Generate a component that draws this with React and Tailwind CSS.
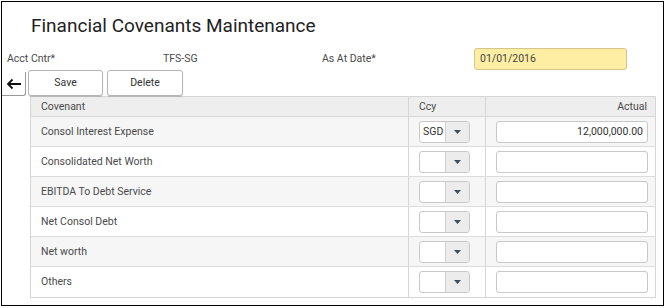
const rows = [
  { name: 'Consol Interest Expense', ccy: 'SGD', actual: '12,000,000.00' },
  { name: 'Consolidated Net Worth', ccy: '', actual: '' },
  { name: 'EBITDA To Debt Service', ccy: '', actual: '' },
  { name: 'Net Consol Debt', ccy: '', actual: '' },
  { name: 'Net worth', ccy: '', actual: '' },
  { name: 'Others', ccy: '', actual: '' },
]

function CcySelect({ value }) {
  return (
    <div className="flex w-[51px] h-[22px] border border-[#c8c8c8] rounded-[3px] overflow-hidden bg-white">
      <div className="flex-1 flex items-center pl-[3px] text-[10.5px] text-[#333]">{value}</div>
      <div className="w-[24px] bg-[#ececec] border-l border-[#d0d0d0] flex items-center justify-center">
        <svg width="7" height="4" viewBox="0 0 7 4"><path d="M0 0h7L3.5 4z" fill="#3d4f5c" /></svg>
      </div>
    </div>
  )
}

export default function App() {
  return (
    <div className="w-[668px] h-[308px] bg-white" style={{ fontFamily: 'Roboto, "Liberation Sans", sans-serif' }}>
      <div className="ml-px mt-px w-[663px] h-[305px] border border-black">
        <h1 className="pl-[29px] pt-[12px] h-[45px] text-[19px] leading-[24px] text-[#222]">
          Financial Covenants Maintenance
        </h1>

        <div className="flex items-center h-[23px] text-[10.5px] text-[#4a4a4a]">
          <span className="pl-[5px] w-[161px]">Acct Cntr*</span>
          <span className="w-[159px]">TFS-SG</span>
          <span className="w-[152px]">As At Date*</span>
          <div className="w-[153px] h-[22px] rounded-[3px] border border-[#d6c58a] bg-[#fdeea4] flex items-center pl-[5px] text-[10.5px] text-[#444]">
            01/01/2016
          </div>
        </div>

        <div className="flex items-end h-[26px]">
          <div className="w-[24px] h-[24px] border-r border-b border-[#999] rounded-br-[3px] flex items-center justify-center">
            <svg width="16" height="12" viewBox="0 0 16 12" fill="none" stroke="#111" strokeWidth="1.8">
              <path d="M15 6H2M6.5 1.5 2 6l4.5 4.5" />
            </svg>
          </div>
          <div className="flex gap-[4px] ml-[2px] self-stretch">
            <button className="w-[75px] h-[26px] border border-[#b5b5b5] rounded-[3px] bg-white text-[10.5px] text-[#333] shadow-[0_1px_1px_rgba(0,0,0,0.15)]">Save</button>
            <button className="w-[76px] h-[26px] border border-[#b5b5b5] rounded-[3px] bg-white text-[10.5px] text-[#333] shadow-[0_1px_1px_rgba(0,0,0,0.15)]">Delete</button>
          </div>
        </div>

        <div className="ml-[28px] w-[626px] border border-[#d6d6d6] text-[10.5px] text-[#4a4a4a]">
          <div className="flex h-[20px] bg-[#eeeeee] border-b border-[#d6d6d6]">
            <div className="w-[377px] pl-[10px] flex items-center">Covenant</div>
            <div className="w-[77px] pl-[10px] flex items-center border-l border-[#d6d6d6]">Ccy</div>
            <div className="flex-1 pr-[8px] flex items-center justify-end border-l border-[#d6d6d6]">Actual</div>
          </div>
          {rows.map((r, i) => (
            <div key={r.name} className={`flex h-[30px] ${i < rows.length - 1 ? 'border-b border-[#dcdcdc]' : ''} ${i % 2 === 0 ? 'bg-[#f6f6f6]' : 'bg-white'}`}>
              <div className="w-[377px] pl-[10px] flex items-center">{r.name}</div>
              <div className="w-[77px] pl-[10px] flex items-center border-l border-[#d6d6d6]">
                <CcySelect value={r.ccy} />
              </div>
              <div className="flex-1 pl-[10px] pr-[7px] flex items-center border-l border-[#d6d6d6]">
                <div className="w-full h-[22px] border border-[#c8c8c8] rounded-[3px] bg-white flex items-center justify-end pr-[4px] text-[10.5px] text-[#333]">
                  {r.actual}
                </div>
              </div>
            </div>
          ))}
        </div>
      </div>
    </div>
  )
}
